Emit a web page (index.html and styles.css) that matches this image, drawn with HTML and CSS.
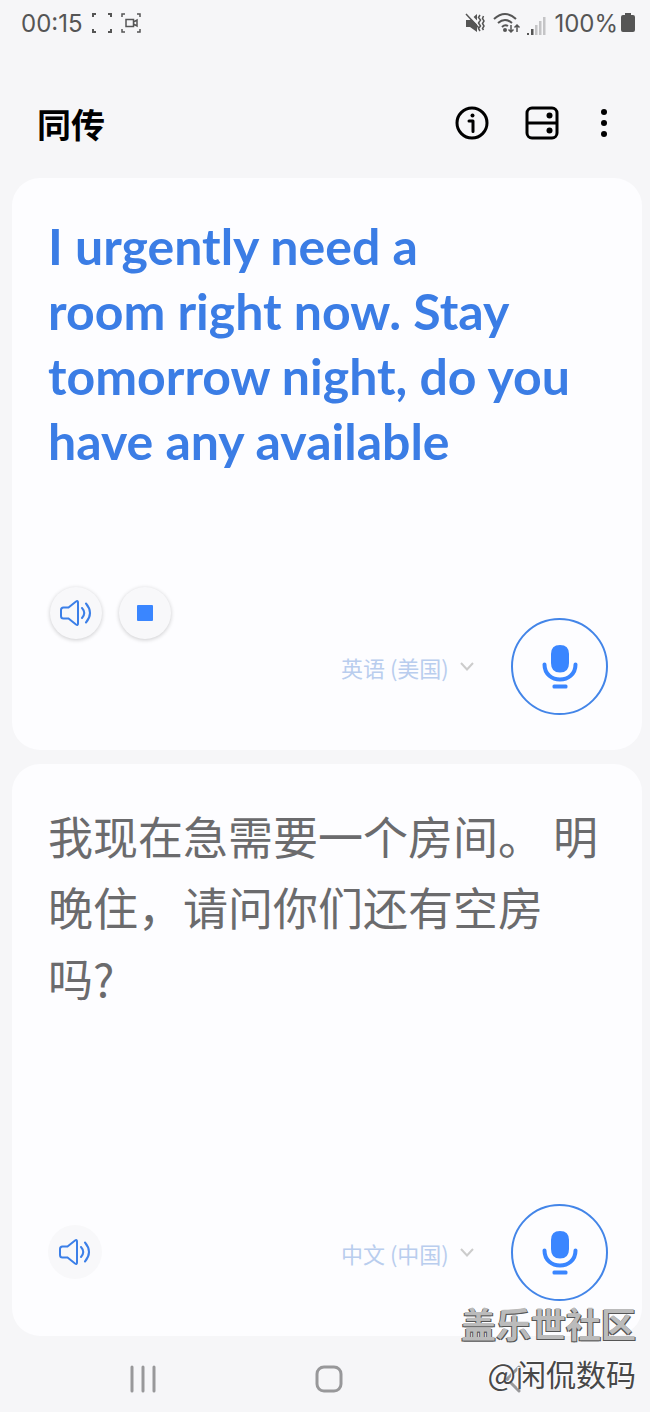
FILE: index.html
```
<!DOCTYPE html>
<html lang="zh-CN">
<head>
  <meta charset="UTF-8">
  <meta name="viewport" content="width=device-width, initial-scale=1.0">
  <title>同传</title>
  <link rel="stylesheet" href="styles.css">
</head>
<body>
  <svg class="defs" aria-hidden="true">
    <symbol id="speaker" viewBox="0 0 34 30">
      <path d="M2 12Q2 9.500 4.500 9.500H9.500L17 3.500Q19 2.300 19 4.500V25.500Q19 27.700 17 26.500L9.500 20.500H4.500Q2 20.500 2 18Z"/>
      <path d="M23 10Q27.500 15 23 20M27 5.500Q35 15 27 24.500"/>
    </symbol>
    <symbol id="mic" viewBox="0 0 36 46">
      <path d="M9 10Q9 1 18 1T27 10V19Q27 28.500 18 28.500T9 19Z"/>
      <path class="cup" d="M2.500 20.500C2.500 40.500 33.500 40.500 33.500 20.500"/>
      <rect x="10.500" y="40.500" width="15" height="4" rx="1.500"/>
    </symbol>
    <symbol id="chevron" viewBox="0 0 16 10">
      <path d="M2 1L8 7.500L14 1"/>
    </symbol>
  </svg>

  <div class="statusbar">
    <span class="clock">00:15</span>
    <svg class="line" width="20" height="20" viewBox="0 0 20 20"><path d="M1 4V1H4M16 1H19V4M19 16V19H16M4 19H1V16"/></svg>
    <svg class="line cam" width="20" height="20" viewBox="0 0 20 20"><path d="M1 4V1H4M16 1H19V4M19 16V19H16M4 19H1V16M5 6.500H12.500V13.500H5ZM12.500 9L16 7V13L12.500 11"/></svg>
    <div class="status-right">
      <svg width="20" height="20" viewBox="0 0 20 20">
        <path class="fill" d="M1 7H5L12 1V19L5 14H1Z"/>
        <path class="cut" d="M2.500 0L15 12.500"/>
        <path class="line slim" d="M1 1L13.500 14.500M15 2L13.500 4.500L15.500 7L13.500 10L15.500 13L13.500 15.500L15 18M18.500 3L17.500 5.500L19 8L17.500 10.500L19 13L17.500 15.500L18.500 17"/>
      </svg>
      <svg class="wifi" width="28" height="22" viewBox="0 0 28 22">
        <path class="line" d="M1 7Q12 -3 23 7M5 11Q12 5 19 11M9 15Q12 12 15 14"/>
        <circle class="fill" cx="12" cy="18" r="2"/>
        <path class="line slim" d="M18 13V20M15.500 17.500L18 20L20.500 17.500M24 20V13M21.500 15.500L24 13L26.500 15.500"/>
      </svg>
      <svg class="signal" width="19" height="18" viewBox="0 0 19 18">
        <path class="fill" d="M0 16H2V18H0ZM4 12H6.500V18H4Z"/>
        <path class="off" d="M8 8H10.500V18H8ZM12 4H14.500V18H12ZM16 0H18.500V18H16Z"/>
      </svg>
      <span>100%</span>
      <svg class="fill battery" width="14" height="20" viewBox="0 0 14 20"><path d="M4 0H10V2H12Q14 2 14 4V17Q14 19 12 19H2Q0 19 0 17V4Q0 2 2 2H4Z"/></svg>
    </div>
  </div>

  <header class="header">
    <h1>同传</h1>
    <button type="button" aria-label="信息">
      <svg width="34" height="34" viewBox="0 0 34 34">
        <circle class="stroke" cx="17" cy="17" r="15"/>
        <circle cx="17.500" cy="9.500" r="2"/>
        <path class="stroke" d="M14 15H18V25.500" stroke-linecap="round" stroke-linejoin="round"/>
      </svg>
    </button>
    <button type="button" aria-label="分屏" class="split">
      <svg width="34" height="34" viewBox="0 0 34 34">
        <rect class="stroke" x="2" y="2" width="30" height="30" rx="5"/>
        <path class="stroke" d="M2 17H32"/>
        <circle cx="24.500" cy="9.500" r="3"/>
        <circle cx="24.500" cy="24.500" r="3"/>
      </svg>
    </button>
    <button type="button" aria-label="更多">
      <svg width="8" height="30" viewBox="0 0 8 30">
        <circle cx="4" cy="4" r="3"/><circle cx="4" cy="15" r="3"/><circle cx="4" cy="26" r="3"/>
      </svg>
    </button>
  </header>

  <main class="panels">
    <section class="panel source">
      <p class="text">I urgently need a<br>room right now. Stay<br>tomorrow night, do you<br>have any available</p>
      <div class="controls">
        <div class="playback">
          <button type="button" class="round" aria-label="朗读"><svg class="speaker"><use href="#speaker"/></svg></button>
          <button type="button" class="round" aria-label="停止"><span class="stop"></span></button>
        </div>
        <label class="lang">
          <select aria-label="语言">
            <option>英语 (美国)</option>
          </select>
          <svg><use href="#chevron"/></svg>
        </label>
        <button type="button" class="mic" aria-label="说话"><svg><use href="#mic"/></svg></button>
      </div>
    </section>

    <section class="panel target">
      <p class="text">我现在急需要一个房间。 明晚住，请问你们还有空房吗?</p>
      <div class="controls">
        <div class="playback">
          <button type="button" class="round" aria-label="朗读"><svg class="speaker"><use href="#speaker"/></svg></button>
        </div>
        <label class="lang">
          <select aria-label="语言">
            <option>中文 (中国)</option>
          </select>
          <svg><use href="#chevron"/></svg>
        </label>
        <button type="button" class="mic" aria-label="说话"><svg><use href="#mic"/></svg></button>
      </div>
    </section>
  </main>

  <nav class="navbar">
    <button type="button" aria-label="最近"><svg width="28" height="28" viewBox="0 0 28 28"><path d="M3 2V26M14 2V26M25 2V26"/></svg></button>
    <button type="button" aria-label="主页"><svg width="28" height="28" viewBox="0 0 28 28"><rect x="2" y="2" width="24" height="24" rx="7"/></svg></button>
    <button type="button" aria-label="返回"><svg width="28" height="28" viewBox="0 0 28 28"><path d="M19 2L7 14L19 26"/></svg></button>
  </nav>

  <div class="watermark">
    <div class="site">盖乐世社区</div>
    <div class="user">@闲侃数码</div>
  </div>
</body>
</html>
```
FILE: styles.css
```
* { box-sizing: border-box; }
body {
  position: relative;
  display: flex;
  flex-direction: column;
  min-height: 100vh;
  margin: 0;
  background: #f6f6f8;
  font-family: Lato, "Noto Sans CJK SC", sans-serif;
}
button { display: flex; align-items: center; justify-content: center; padding: 0; border: 0; background: none; }
svg { flex: none; }
.defs { position: absolute; width: 0; height: 0; }

.statusbar { display: flex; align-items: center; height: 46px; padding: 0 15px 0 21px; color: #555; font: 24px Inter, sans-serif; }
.clock { margin-right: 9px; }
.line { fill: none; stroke: #555; stroke-width: 2; }
.slim { stroke-width: 1.5; }
.cam { margin-left: 9px; stroke-width: 1.5; }
.fill { fill: #555; }
.off { fill: #c4c4c6; }
.cut { stroke: #f6f6f8; stroke-width: 3; }
.status-right { display: flex; align-items: center; margin-left: auto; }
.wifi { margin-left: 8px; }
.signal { margin: 6px 8px 0 6px; }
.battery { margin-left: 3px; }

.header { display: flex; align-items: center; height: 132px; padding: 22px 42px 0 37px; }
.header h1 { margin: 0 auto 0 0; padding-top: 4px; font-size: 34px; font-weight: 700; line-height: 48px; }
.header .split { margin: 0 41px 0 36px; }
.header .stroke { fill: none; stroke: #000; stroke-width: 3; }

.panels { flex: 1; display: flex; flex-direction: column; gap: 14px; padding: 0 8px 0 12px; }
.panel { flex: 1 1 0px; display: flex; flex-direction: column; padding: 36px 34px 35px 36px; border-radius: 28px; background: #fdfdff; }
.text { margin: 0; }
.source .text { color: #3b7de5; font-size: 50px; font-weight: 700; line-height: 65px; }
.target .text { color: #6b6b6d; font: 45px/71px "Noto Sans CJK SC", sans-serif; }

.controls { display: flex; align-items: flex-end; margin-top: auto; }
.playback { display: flex; gap: 17px; margin: 0 auto 22px 0; }
.source .playback { margin-bottom: 76px; padding-left: 2px; }
.round { width: 54px; height: 54px; border-radius: 50%; background: #f8f8fa; }
.source .round { width: 52px; height: 52px; box-shadow: 0 1px 4px rgba(0, 0, 0, .2); }
.speaker { width: 34px; height: 30px; fill: none; stroke: #3b7fe8; stroke-width: 2; stroke-linecap: round; }
.stop { width: 16px; height: 16px; border-radius: 1px; background: #3a86ff; }
.lang { display: flex; align-items: center; gap: 10px; margin: 0 36px 33px 0; }
.lang select { padding: 0; border: 0; appearance: none; background: none; color: #b9cdee; font: 22px/30px "Noto Sans CJK SC", sans-serif; }
.lang svg { width: 16px; height: 10px; fill: none; stroke: #ccc; stroke-width: 2; }
.mic { width: 97px; height: 97px; border: 2px solid #4385e8; border-radius: 50%; }
.mic svg { width: 36px; height: 46px; fill: #3a86ff; }
.cup { fill: none; stroke: #3a86ff; stroke-width: 4; stroke-linecap: round; }

.navbar { display: flex; justify-content: space-between; height: 76px; padding: 10px 122px 0 129px; }
.navbar svg { fill: none; stroke: #98989a; stroke-width: 3; stroke-linecap: round; }

.watermark { position: absolute; right: 14px; bottom: 14px; text-align: right; font-family: "Noto Sans CJK SC", sans-serif; pointer-events: none; }
.site { color: #bbb; font-size: 35px; font-weight: 700; line-height: 50px; text-shadow: -1px 1px 0 #555, 1px 1px 0 #555; }
.user { color: #484848; font-size: 30px; line-height: 50px; text-shadow: -1px -1px 0 #fff; }
```
